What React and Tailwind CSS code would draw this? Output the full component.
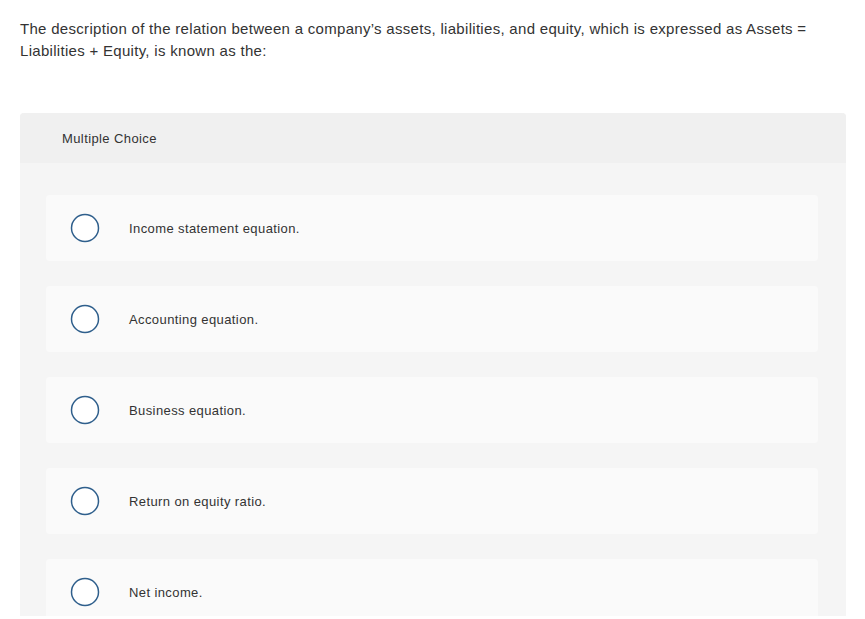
import React from 'react';

const options = [
  'Income statement equation.',
  'Accounting equation.',
  'Business equation.',
  'Return on equity ratio.',
  'Net income.',
];

const Radio = () => (
  <svg width="30" height="30" viewBox="0 0 30 30" className="shrink-0">
    <circle cx="15" cy="15" r="13.5" fill="#ffffff" stroke="#2f5f8c" strokeWidth="1.5" />
  </svg>
);

const App = () => {
  return (
    <div className="h-[616px] overflow-hidden bg-white font-['Liberation_Sans',Arial,sans-serif] text-[#333333]">
      <div className="px-5 pt-[18px]">
        <p className="text-[15px] leading-[22px] tracking-[0.3px] w-[812px]">
          The description of the relation between a company’s assets, liabilities, and equity, which is expressed as Assets = Liabilities + Equity, is known as the:
        </p>

        <div className="mt-[51px] w-[826px] rounded-t bg-[#f5f5f5]">
          <div className="h-[50px] flex items-center px-[42px] pt-px rounded-t bg-[#f0f0f0] text-[13px] tracking-[0.4px]">
            Multiple Choice
          </div>
          <div className="flex flex-col gap-[25px] pt-8 pl-[26px] pr-[28px] pb-8">
            {options.map((opt) => (
              <div
                key={opt}
                className="h-[66px] flex items-center rounded bg-[#fafafa] pl-6"
              >
                <Radio />
                <span className="ml-[29px] mt-px text-[13px] tracking-[0.4px]">{opt}</span>
              </div>
            ))}
          </div>
        </div>
      </div>
    </div>
  );
};

export default App;
